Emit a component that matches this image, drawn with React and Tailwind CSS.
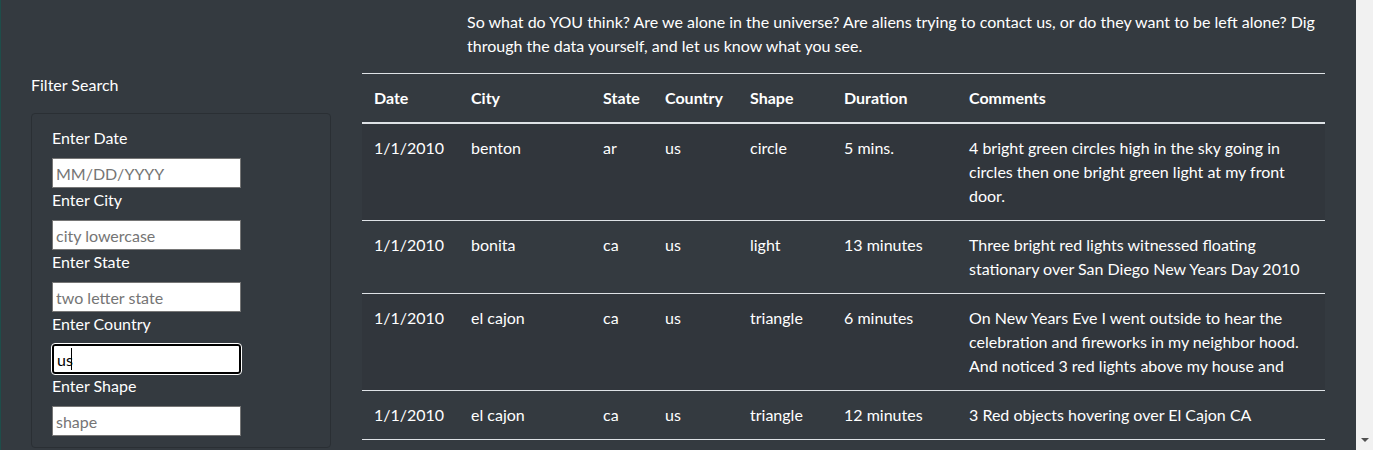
const sightings = [
  {
    date: '1/1/2010',
    city: 'benton',
    state: 'ar',
    country: 'us',
    shape: 'circle',
    duration: '5 mins.',
    comments: '4 bright green circles high in the sky going in circles then one bright green light at my front door.',
  },
  {
    date: '1/1/2010',
    city: 'bonita',
    state: 'ca',
    country: 'us',
    shape: 'light',
    duration: '13 minutes',
    comments: 'Three bright red lights witnessed floating stationary over San Diego New Years Day 2010',
  },
  {
    date: '1/1/2010',
    city: 'el cajon',
    state: 'ca',
    country: 'us',
    shape: 'triangle',
    duration: '6 minutes',
    comments: 'On New Years Eve I went outside to hear the celebration and fireworks in my neighbor hood. And noticed 3 red lights above my house and',
  },
  {
    date: '1/1/2010',
    city: 'el cajon',
    state: 'ca',
    country: 'us',
    shape: 'triangle',
    duration: '12 minutes',
    comments: '3 Red objects hovering over El Cajon CA',
  },
]

const filters = [
  { label: 'Enter Date', placeholder: 'MM/DD/YYYY' },
  { label: 'Enter City', placeholder: 'city lowercase' },
  { label: 'Enter State', placeholder: 'two letter state' },
  { label: 'Enter Country', placeholder: 'us', value: 'us' },
  { label: 'Enter Shape', placeholder: 'shape' },
]

export default function App() {
  return (
    <div className="flex h-[450px] overflow-hidden text-white text-base leading-6" style={{ fontFamily: 'Lato, "Open Sans", sans-serif' }}>
      <div className="flex-1 bg-[#343a40] border-l border-[#1e4d4a]">
        <p className="ml-[466px] pt-[10px] w-[858px] mb-[15px]">
          So what do YOU think? Are we alone in the universe? Are aliens trying to contact us, or do they want to be left alone? Dig through the data yourself, and let us know what you see.
        </p>

        <div className="flex">
          <div className="ml-[30px] w-[300px] shrink-0">
            <h2 className="mb-4">Filter Search</h2>
            <div className="border border-[#2a2f34] rounded pt-3 pb-[11px] px-5">
              {filters.map((f) => (
                <div key={f.label}>
                  <label className="block mb-2">{f.label}</label>
                  {f.value ? (
                    <div className="relative w-[189px]">
                      <input
                        type="text"
                        defaultValue={f.value}
                        className="block w-[189px] h-[30px] bg-white text-black px-[3px] border-2 border-black rounded-[3px] outline outline-1 outline-white"
                      />
                      {/* caret */}
                      <span className="absolute left-[19px] top-[4px] w-px h-[22px] bg-black" />
                    </div>
                  ) : (
                    <input
                      type="text"
                      placeholder={f.placeholder}
                      className="block w-[189px] h-[30px] bg-white text-black px-[3px] border border-[#767676] placeholder:text-[#757575] outline-none"
                    />
                  )}
                </div>
              ))}
            </div>
          </div>

          <div className="ml-[31px] w-[963px] shrink-0">
            <table className="w-full table-fixed text-left border-collapse">
              <colgroup>
                <col className="w-[97px]" />
                <col className="w-[132px]" />
                <col className="w-[62px]" />
                <col className="w-[85px]" />
                <col className="w-[94px]" />
                <col className="w-[125px]" />
                <col />
              </colgroup>
              <thead>
                <tr className="border-t border-b-2 border-[#dee2e6]">
                  <th className="p-3 font-bold">Date</th>
                  <th className="p-3 font-bold">City</th>
                  <th className="p-3 font-bold">State</th>
                  <th className="p-3 font-bold">Country</th>
                  <th className="p-3 font-bold">Shape</th>
                  <th className="p-3 font-bold">Duration</th>
                  <th className="p-3 font-bold">Comments</th>
                </tr>
              </thead>
              <tbody>
                {sightings.map((s, i) => (
                  <tr key={i} className={`border-b border-[#dee2e6] align-top ${i % 2 === 0 ? 'bg-[#31363c]' : ''}`}>
                    <td className="p-3">{s.date}</td>
                    <td className="p-3">{s.city}</td>
                    <td className="p-3">{s.state}</td>
                    <td className="p-3">{s.country}</td>
                    <td className="p-3">{s.shape}</td>
                    <td className="p-3">{s.duration}</td>
                    <td className="p-3">{s.comments}</td>
                  </tr>
                ))}
              </tbody>
            </table>
          </div>
        </div>
      </div>

      <div className="w-[17px] shrink-0 bg-[#f1f1f1] flex flex-col justify-end items-center pb-[8px]">
        <div className="w-0 h-0 border-l-[4px] border-r-[4px] border-t-[4px] border-l-transparent border-r-transparent border-t-[#505050]" />
      </div>
    </div>
  )
}
